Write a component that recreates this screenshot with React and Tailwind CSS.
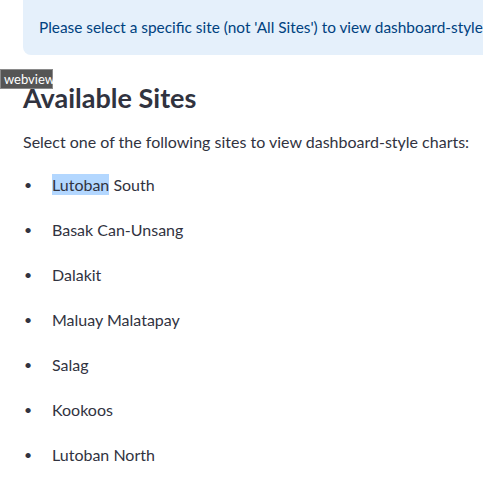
import React from 'react';

const sites = [
  'Lutoban South',
  'Basak Can-Unsang',
  'Dalakit',
  'Maluay Malatapay',
  'Salag',
  'Kookoos',
  'Lutoban North',
];

const App = () => {
  return (
    <div
      className="relative w-[483px] h-[488px] overflow-hidden bg-white text-[#31333f]"
      style={{ fontFamily: 'Lato, "Noto Sans", sans-serif' }}
    >
      <div className="px-[23px]">
        <div className="w-[700px] h-[55px] rounded-b-lg bg-[#e5f0fb] text-[#004280] text-[15.4px] flex items-center pl-4 pt-[1px] whitespace-nowrap">
          Please select a specific site (not 'All Sites') to view dashboard-style charts for that site.
        </div>

        <h2 className="mt-[26px] text-[27px] font-bold leading-tight">Available Sites</h2>

        <p className="mt-[15px] text-[16px] whitespace-nowrap">
          Select one of the following sites to view dashboard-style charts:
        </p>

        <ul className="mt-[19px] flex flex-col gap-[21px]">
          {sites.map((site, i) => (
            <li key={site} className="flex items-center h-6 text-[16px]">
              <span className="w-[29px] pl-[1px] text-[14px]">•</span>
              {i === 0 ? (
                <span>
                  <span className="bg-[#b3d7ff] py-[1px]">Lutoban</span> South
                </span>
              ) : (
                <span>{site}</span>
              )}
            </li>
          ))}
        </ul>
      </div>

      {/* tooltip */}
      <div className="absolute left-0 top-[69px] w-[53px] h-5 pl-[3px] flex items-center bg-[#555] border border-[#8a8a8a] text-white text-[13px] leading-none">
        webview
      </div>
    </div>
  );
};

export default App;
